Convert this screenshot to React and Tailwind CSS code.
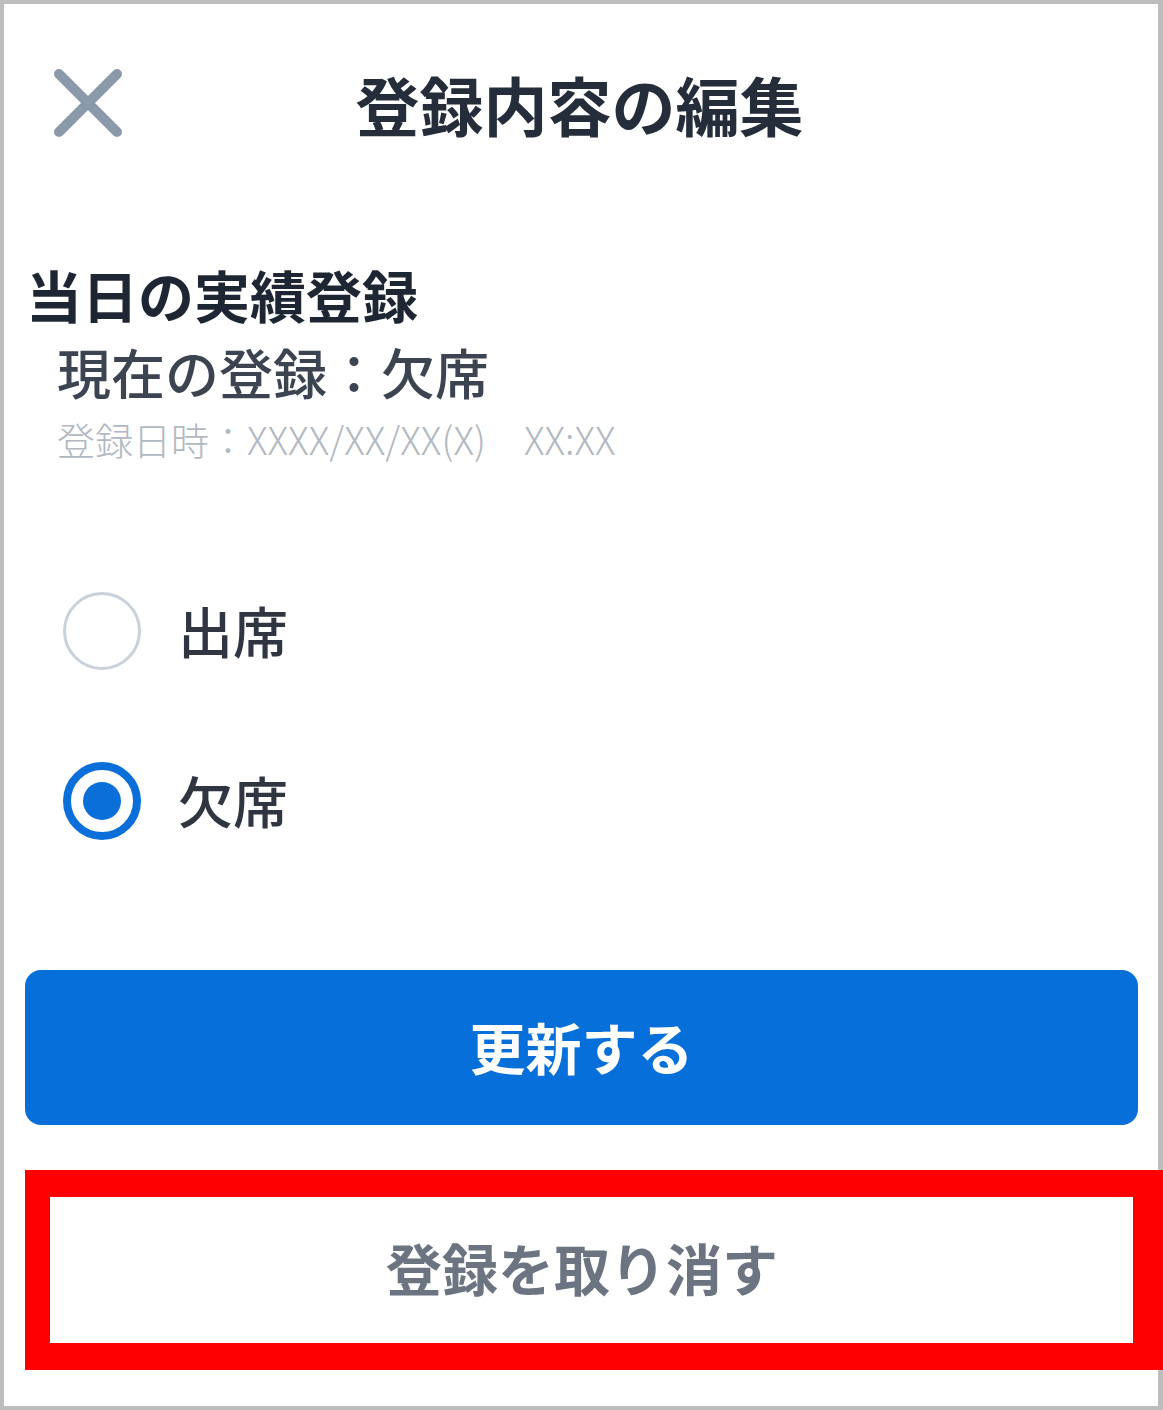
import { useState } from "react";

const font = { fontFamily: '"Noto Sans CJK JP", "Noto Sans", sans-serif' };

const CloseIcon = () => (
  <svg width="68" height="68" viewBox="0 0 68 68" fill="none">
    <path d="M5 5 L63 63 M63 5 L5 63" stroke="#8a9aab" strokeWidth="10" strokeLinecap="round" />
  </svg>
);

const Radio = ({ checked }) =>
  checked ? (
    <div className="w-[78px] h-[78px] rounded-full border-[8px] border-[#0a6fd8] flex items-center justify-center">
      <div className="w-[38px] h-[38px] rounded-full bg-[#0a6fd8]" />
    </div>
  ) : (
    <div className="w-[78px] h-[78px] rounded-full border-[3px] border-[#c9d1da]" />
  );

export default function App() {
  const [status, setStatus] = useState("absent");

  const options = [
    { value: "present", label: "出席" },
    { value: "absent", label: "欠席" },
  ];

  return (
    <div
      style={font}
      className="w-[1163px] h-[1410px] bg-white border-[4px] border-r-[5px] border-[#bdbdbd] flex flex-col"
    >
      {/* Header */}
      <header className="h-[198px] grid grid-cols-[1fr_auto_1fr] items-center">
        <button className="ml-[50px] w-[68px] h-[68px] flex items-center justify-center">
          <CloseIcon />
        </button>
        <h1 className="text-[64px] leading-[72px] font-bold text-[#252d3a] pr-[3px]">登録内容の編集</h1>
        <div />
      </header>

      {/* Current status */}
      <section className="pl-[22px]">
        <h2 className="mt-[60px] text-[56px] leading-[64px] font-bold text-[#1f2633]">当日の実績登録</h2>
        <p className="mt-[16px] pl-[31px] text-[54px] leading-[60px] font-medium text-[#3d4451]">
          現在の登録：欠席
        </p>
        <p className="mt-[15px] pl-[31px] text-[38px] leading-[44px] font-light text-[#b1b8c1]">
          登録日時：XXXX/XX/XX(X)　XX:XX
        </p>
      </section>

      {/* Options */}
      <div className="mt-[110px] flex flex-col gap-[50px] pl-[59px]">
        {options.map((o) => (
          <label
            key={o.value}
            onClick={() => setStatus(o.value)}
            className="h-[120px] flex items-center gap-[37px] cursor-pointer"
          >
            <Radio checked={status === o.value} />
            <span className="-mt-[4px] text-[55px] leading-[60px] font-medium text-[#2f3642]">{o.label}</span>
          </label>
        ))}
      </div>

      {/* Actions */}
      <button className="mt-[109px] ml-[21px] mr-[20px] h-[155px] rounded-[16px] bg-[#066fd9] text-white text-[56px] font-bold leading-[60px] pb-[4px]">
        更新する
      </button>

      <div className="mt-[45px] ml-[21px] -mr-[5px] h-[200px] border-t-[27px] border-b-[27px] border-l-[25px] border-r-[30px] border-[#ff0000] bg-white flex items-center justify-center">
        <span className="pr-[19px] pb-[6px] text-[56px] leading-[60px] font-bold text-[#6b7480]">
          登録を取り消す
        </span>
      </div>
    </div>
  );
}
